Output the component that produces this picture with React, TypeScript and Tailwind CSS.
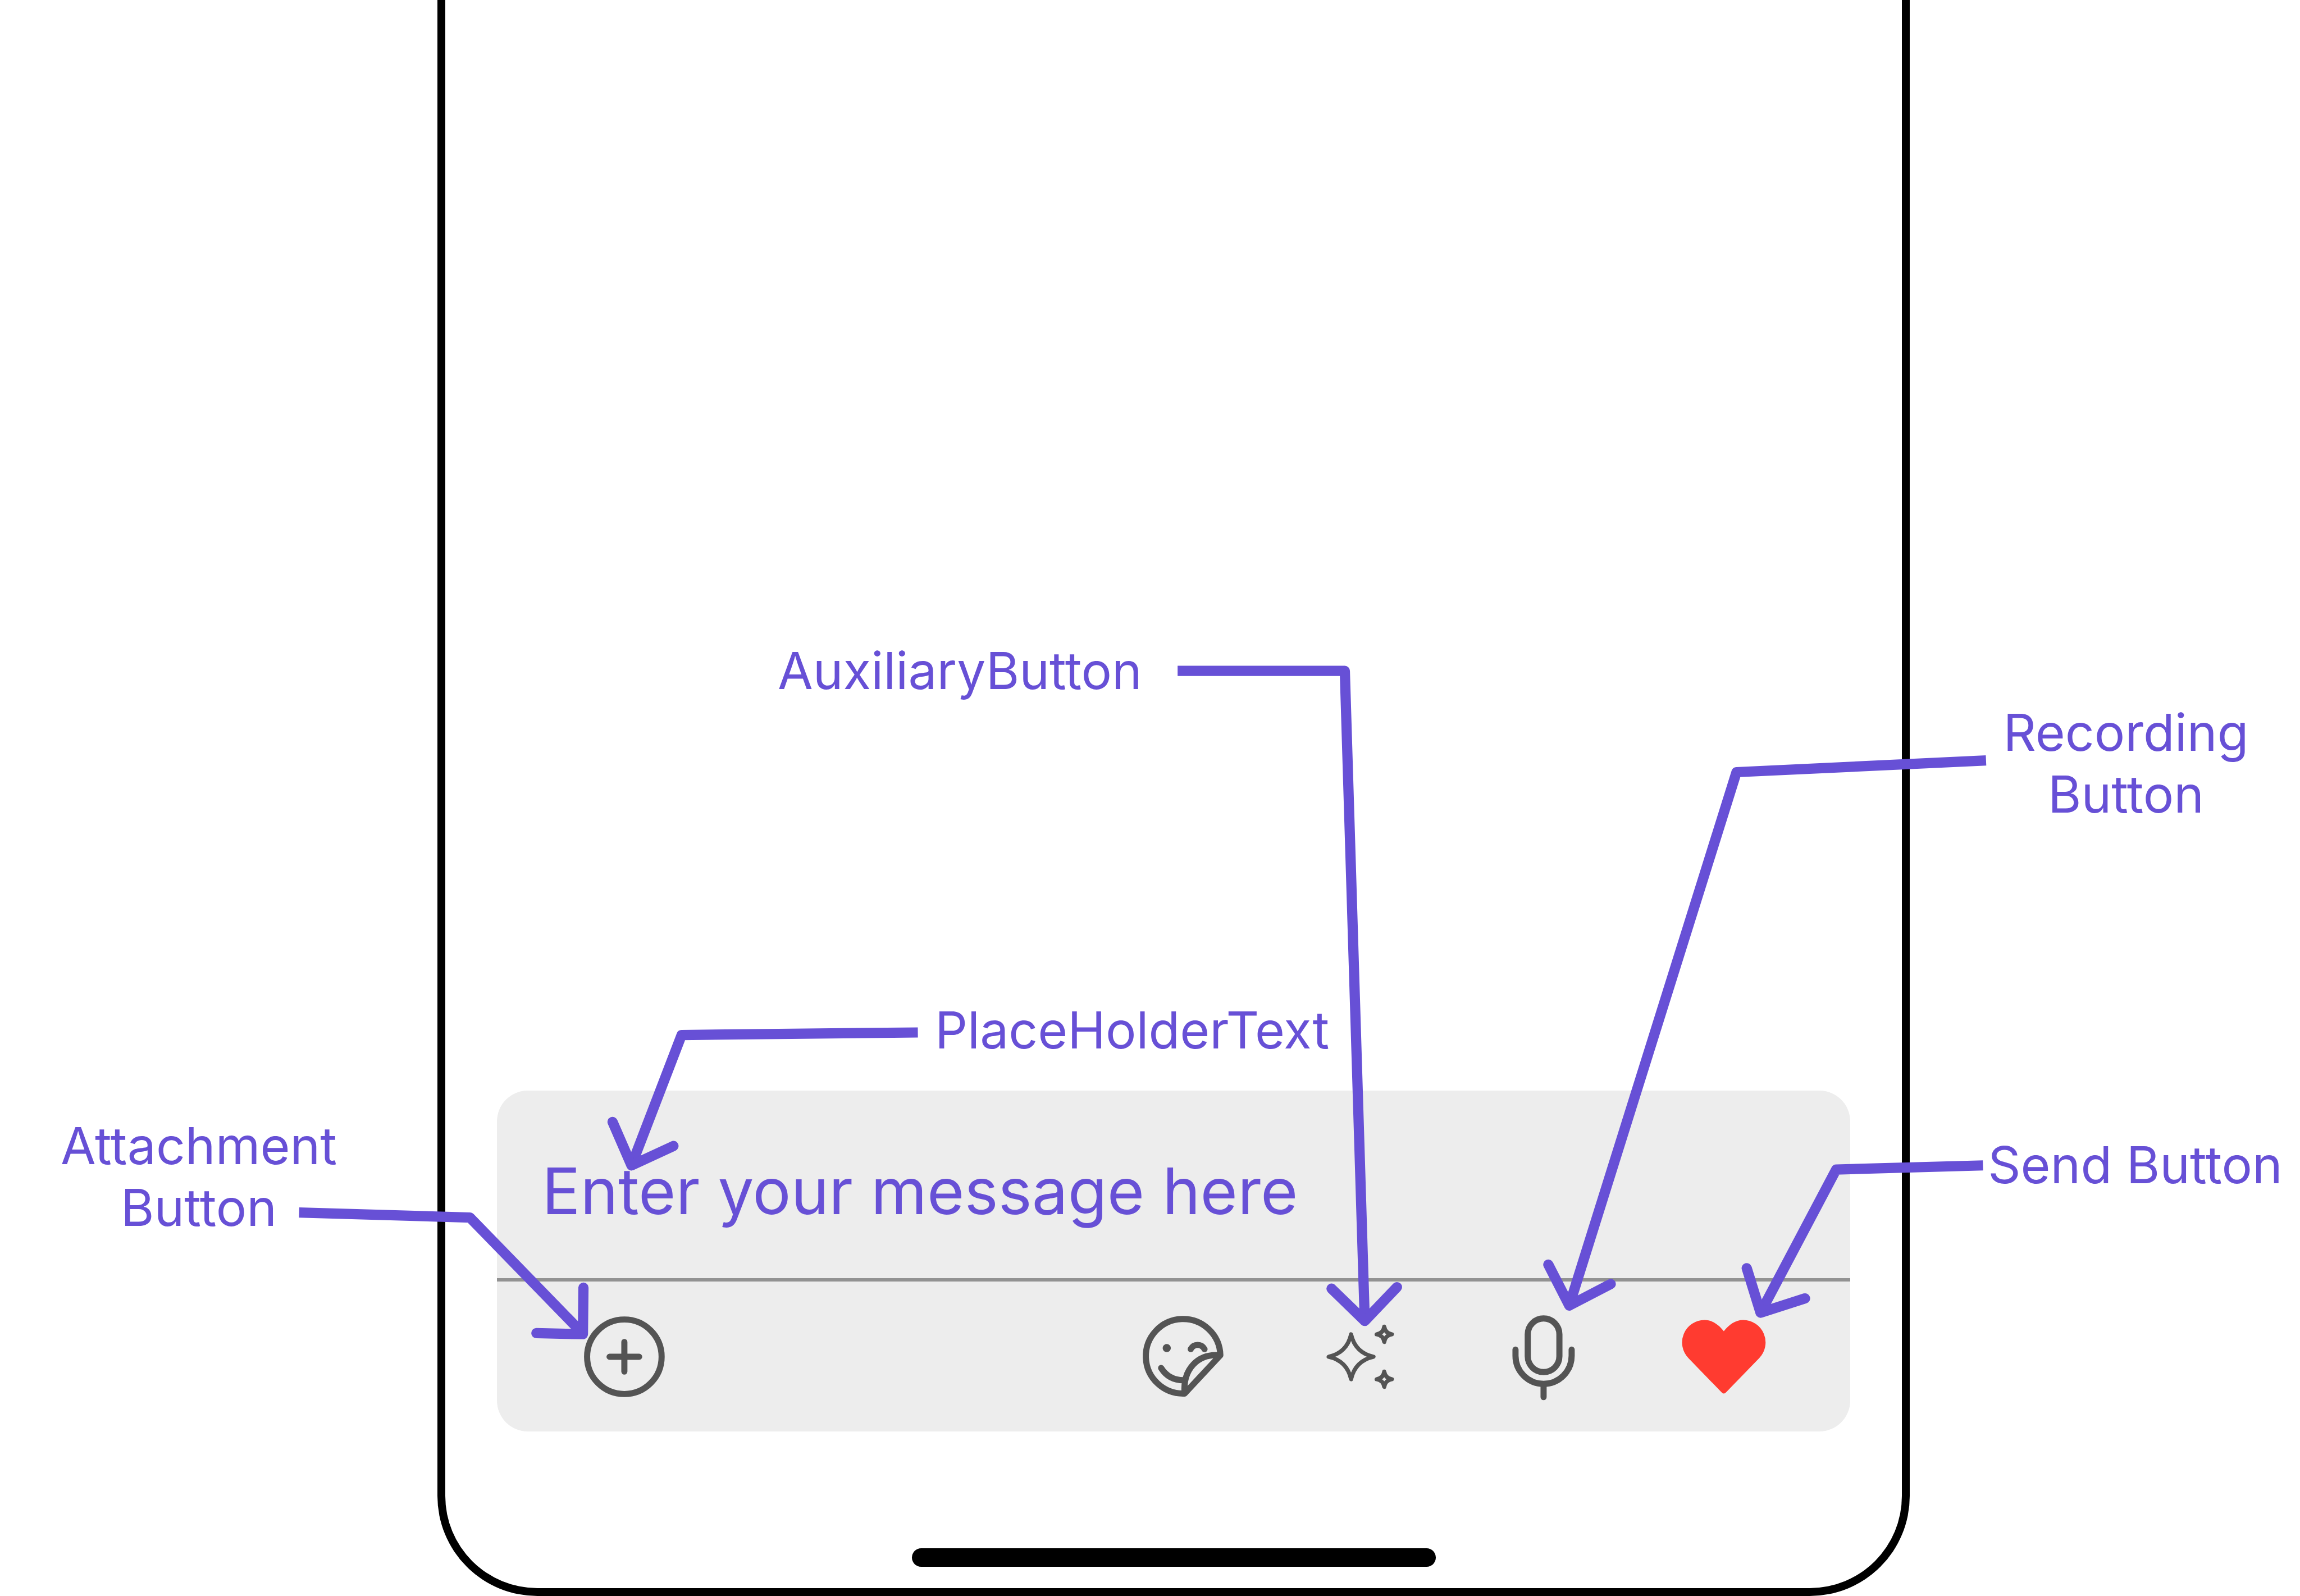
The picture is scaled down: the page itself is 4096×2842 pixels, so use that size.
import type { ReactNode } from "react";

function PlusIcon() {
  return (
    <svg viewBox="0 0 176 176" className="size-full" fill="none" stroke="#545454" strokeWidth="12" strokeLinecap="round" aria-hidden="true">
      <circle cx="89" cy="88" r="73" />
      <path d="M89 59V117M60 88H118" />
    </svg>
  );
}

function StickerIcon() {
  return (
    <svg viewBox="0 0 176 176" className="size-full" fill="none" stroke="#545454" strokeWidth="12" strokeLinecap="round" aria-hidden="true">
      <path d="M92 160A73 73 0 1 1 162 85L92 160C88 112 118 81 162 85" strokeLinejoin="round" />
      <path d="M104 73C110 62 125 62 131 73" />
      <path d="M46 110Q61 134 90 134" />
      <circle cx="57" cy="71" r="8" fill="#545454" stroke="none" />
    </svg>
  );
}

function SparklesIcon() {
  return (
    <svg viewBox="0 0 176 176" className="size-full" fill="none" stroke="#545454" strokeWidth="8" strokeLinejoin="round" aria-hidden="true">
      <path d="M65 44Q73 80 109 88Q73 96 65 132Q57 96 21 88Q57 80 65 44Z" />
      <path d="M130 29Q132 42 145 44Q132 46 130 59Q128 46 115 44Q128 42 130 29Z" />
      <path d="M130 117Q132 130 145 132Q132 134 130 147Q128 134 115 132Q128 130 130 117Z" />
    </svg>
  );
}

function MicIcon() {
  return (
    <svg viewBox="0 0 176 176" className="size-full" fill="none" stroke="#545454" strokeWidth="12" strokeLinecap="round" aria-hidden="true">
      <rect x="58" y="13" width="62" height="105" rx="31" />
      <path d="M34 74V86A55 55 0 0 0 144 86V74M89 141V167" />
    </svg>
  );
}

function HeartIcon() {
  return (
    <svg viewBox="0 0 176 176" className="size-full" fill="#ff3b30" aria-hidden="true">
      <path d="M89 38C79 25 66 16 51 16A44 44 0 0 0 20 91L84 157Q89 163 94 157L158 91A44 44 0 0 0 127 16C112 16 99 25 89 38Z" />
    </svg>
  );
}

function IconButton({ label, children }: { label: string; children: ReactNode }) {
  return (
    <button type="button" aria-label={label} className="size-[160px] shrink-0">
      {children}
    </button>
  );
}

/* Each callout is a leader line plus the open arrow head at its tip. */
const callouts = [
  { name: "attachment", line: "M585 2371L919 2381L1140 2608", head: "M1141 2518L1140 2609L1049 2607" },
  { name: "placeholder", line: "M1795 2019L1333 2024L1235 2279", head: "M1198 2194L1235 2279L1317 2241" },
  { name: "auxiliary", line: "M2303 1312H2630L2669 2583", head: "M2604 2520L2669 2583L2732 2517" },
  { name: "recording", line: "M3884 1487L3396 1510L3069 2553", head: "M3028 2473L3069 2553L3150 2511" },
  { name: "send", line: "M3878 2279L3591 2287L3443 2567", head: "M3416 2480L3443 2567L3530 2539" },
];

function Callouts() {
  return (
    <svg
      viewBox="0 0 4498 3121"
      preserveAspectRatio="none"
      className="pointer-events-none absolute inset-0 size-full"
      fill="none"
      stroke="#6750d6"
      strokeWidth="20"
      strokeLinejoin="round"
      aria-hidden="true"
    >
      {callouts.map((c) => (
        <g key={c.name}>
          <path d={c.line} />
          <path d={c.head} strokeLinecap="round" />
        </g>
      ))}
    </svg>
  );
}

export default function App() {
  return (
    <main className="relative grid min-h-screen grid-cols-[779fr_2622fr_695fr] bg-white font-['Inter',sans-serif] text-[91px] leading-[110px] text-[#6750d6]">
      <aside className="flex flex-col pt-[1985px] pr-[71px] text-center">
        <p>
          Attachment
          <br />
          Button
        </p>
      </aside>

      <section className="flex min-w-0 flex-col rounded-b-[178px] border-x-[14px] border-b-[14px] border-black pt-[1139px] pb-[38px]">
        <p className="pl-[592px]">AuxiliaryButton</p>
        <p className="mt-[530px] pl-[872px]">PlaceHolderText</p>

        <form className="mx-[92px] mt-[53px] rounded-[55px] bg-[#ededed]" onSubmit={(e) => e.preventDefault()}>
          <input
            type="text"
            aria-label="Message"
            placeholder="Enter your message here"
            className="block h-[334px] w-full bg-transparent px-[80px] pt-[22px] text-[114px] leading-[140px] text-[#6750d6] outline-none placeholder:text-[#6750d6] placeholder:opacity-100"
          />
          <div className="flex h-[273px] items-center justify-between border-t-[6px] border-[#929292] px-[146px]">
            <IconButton label="Attach">
              <PlusIcon />
            </IconButton>
            <div className="flex gap-[161px]">
              <IconButton label="Stickers">
                <StickerIcon />
              </IconButton>
              <IconButton label="AI">
                <SparklesIcon />
              </IconButton>
              <IconButton label="Record">
                <MicIcon />
              </IconButton>
              <IconButton label="Send">
                <HeartIcon />
              </IconButton>
            </div>
          </div>
        </form>

        <div className="mx-auto mt-auto h-[33px] w-[933px] rounded-full bg-black" />
      </section>

      <aside className="flex min-w-0 flex-col pt-[1249px] text-center">
        <p className="pl-[75px]">
          Recording
          <br />
          Button
        </p>
        <p className="mt-[550px] pl-[108px] whitespace-nowrap">Send Button</p>
      </aside>

      <Callouts />
    </main>
  );
}
